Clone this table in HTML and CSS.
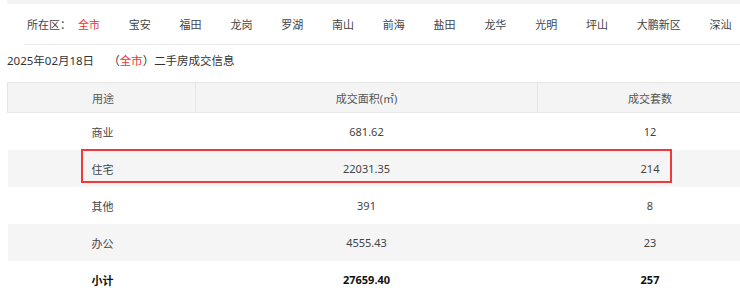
FILE: index.html
```html
<!DOCTYPE html>
<html lang="zh-CN">
<head>
<meta charset="utf-8">
<title>二手房成交信息</title>
<link rel="stylesheet" href="styles.css">
</head>
<body>
<div class="page">
  <div class="topbar"></div>
  <div class="nav">
    <span class="nav-label">所在区：</span>
    <ul class="nav-list">
      <li class="active">全市</li>
      <li>宝安</li>
      <li>福田</li>
      <li>龙岗</li>
      <li>罗湖</li>
      <li>南山</li>
      <li>前海</li>
      <li>盐田</li>
      <li>龙华</li>
      <li>光明</li>
      <li>坪山</li>
      <li>大鹏新区</li>
      <li>深汕</li>
    </ul>
  </div>
  <div class="title">2025年02月18日<span class="paren">（<span class="red">全市</span>）</span>二手房成交信息</div>
  <div class="table-wrap">
    <table class="data">
      <thead>
        <tr><th class="c1">用途</th><th class="c2">成交面积(㎡)</th><th class="c3">成交套数</th></tr>
      </thead>
      <tbody>
        <tr><td class="c1">商业</td><td>681.62</td><td>12</td></tr>
        <tr class="alt"><td class="c1">住宅</td><td>22031.35</td><td>214</td></tr>
        <tr><td class="c1">其他</td><td>391</td><td>8</td></tr>
        <tr class="alt"><td class="c1">办公</td><td>4555.43</td><td>23</td></tr>
        <tr class="total"><td class="c1">小计</td><td>27659.40</td><td>257</td></tr>
      </tbody>
    </table>
    <div class="highlight"></div>
  </div>
</div>
</body>
</html>
```

FILE: styles.css
```css
html, body {
  margin: 0;
  padding: 0;
  background: #fff;
  overflow: hidden;
}
body {
  font-family: "Noto Sans", "Noto Sans CJK SC", sans-serif;
  color: #333;
}
.page {
  padding-left: 7px;
  width: 760px;
}
.topbar {
  height: 4px;
  background: #f4f4f4;
}
.nav {
  display: flex;
  align-items: center;
  height: 40px;
  margin-left: 17px;
  padding-left: 3px;
  border-bottom: 1px solid #e8e8e8;
  font-size: 11px;
  color: #444;
}
.nav-label {
  width: 51px;
}
.nav-list {
  display: flex;
  list-style: none;
  margin: 0;
  padding: 0;
  gap: 28.8px;
}
.nav-list li {
  white-space: nowrap;
}
.nav-list .active {
  color: #f23030;
}
.title {
  font-size: 11.5px;
  line-height: 20px;
  margin: 6px 0 11px;
  color: #333;
}
.paren {
  margin-left: 14px;
}
.red {
  color: #f23030;
}
.table-wrap {
  position: relative;
}
.data {
  border-collapse: collapse;
  width: 753px;
  font-size: 11px;
  color: #444;
  table-layout: fixed;
}
.data th {
  height: 29px;
  padding: 0;
  font-weight: normal;
  background: #f4f4f4;
  border: 1px solid #e6e6e6;
  color: #555;
}
.data td {
  height: 37px;
  padding: 0;
  text-align: center;
}
.data .c1 {
  width: 188px;
  text-align: left;
  padding-left: 84px;
  box-sizing: border-box;
}
.data th.c1 {
  padding-left: 84px;
}
.data .c2 {
  width: 341px;
}
.data .c3 {
  width: 224px;
}
.data .alt td {
  background: #f5f5f5;
}
.data .total td {
  font-weight: bold;
  color: #111;
}
.highlight {
  position: absolute;
  left: 74px;
  top: 67px;
  width: 587px;
  height: 30px;
  border: 2px solid #f03a3a;
}
```
